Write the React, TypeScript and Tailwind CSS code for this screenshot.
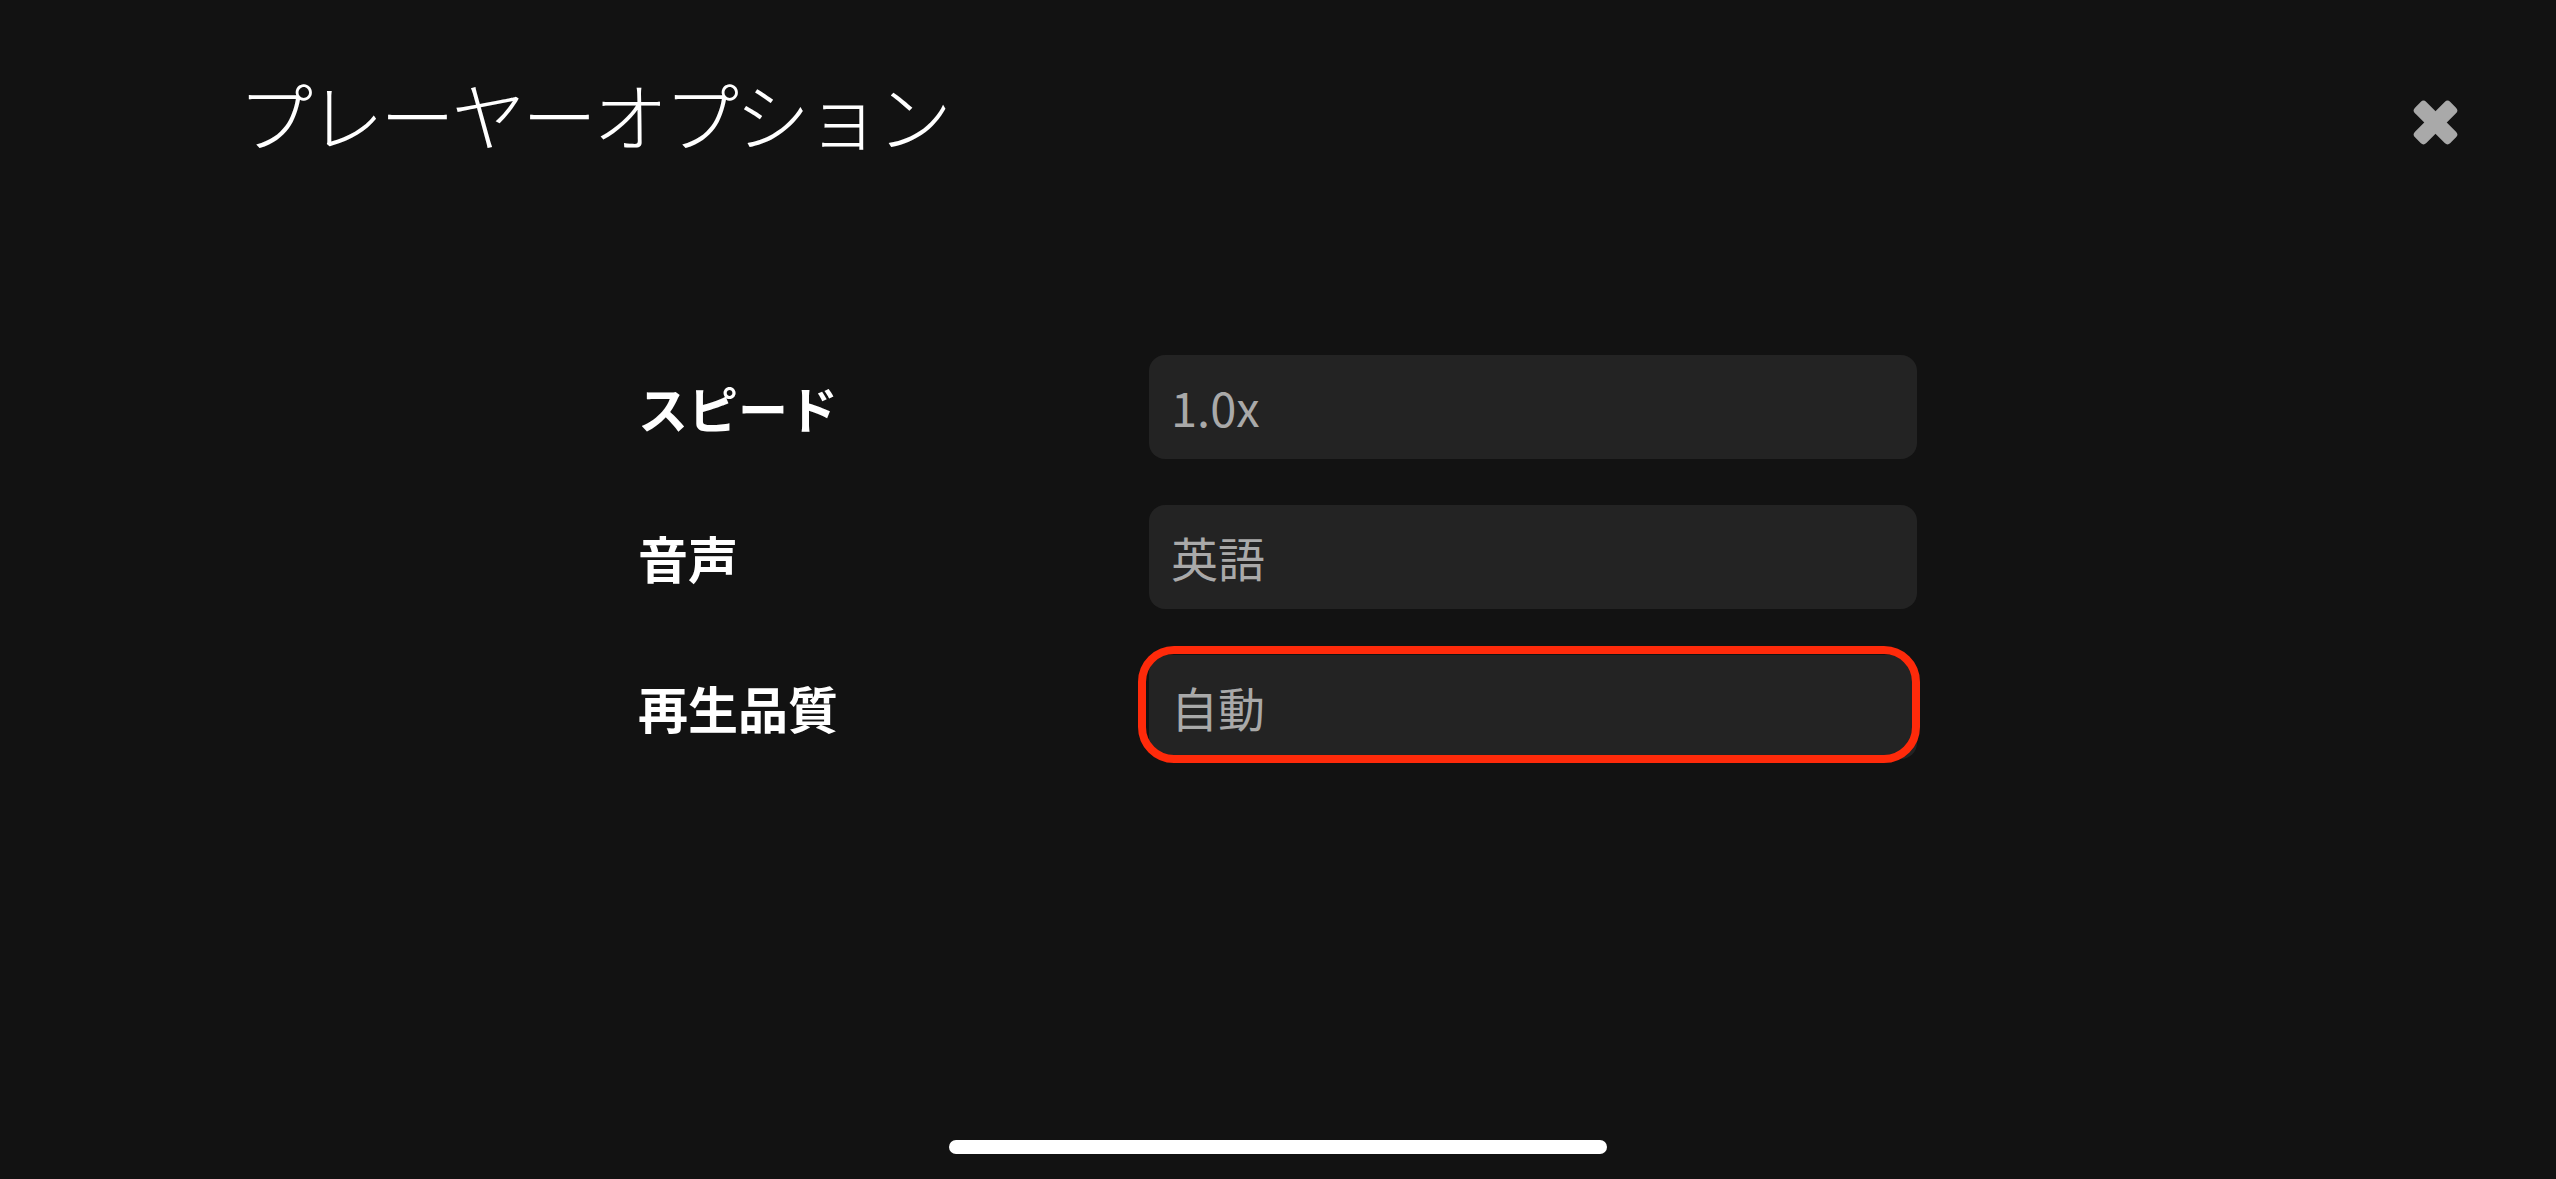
const FONT = { fontFamily: '"Noto Sans CJK JP", "Noto Sans", sans-serif' };

const OPTIONS = [
  { label: "スピード", value: "1.0x", focused: false },
  { label: "音声", value: "英語", focused: false },
  { label: "再生品質", value: "自動", focused: true },
];

function CloseIcon() {
  return (
    <svg width="47" height="47" viewBox="0 0 47 47" aria-hidden>
      <rect x="-1.5" y="15.5" width="50" height="16" rx="4" fill="#a9a9a9" transform="rotate(45 23.5 23.5)" />
      <rect x="-1.5" y="15.5" width="50" height="16" rx="4" fill="#a9a9a9" transform="rotate(-45 23.5 23.5)" />
    </svg>
  );
}

export default function App() {
  return (
    <div className="relative flex h-[1179px] w-full flex-col overflow-hidden bg-[#121212]" style={FONT}>
      {/* header */}
      <div className="flex items-start justify-between pl-[238px] pr-[97px] pt-[76px]">
        <h1 className="text-[75px] font-light leading-none tracking-[-4px] text-white">プレーヤーオプション</h1>
        <button className="mt-[23px]">
          <CloseIcon />
        </button>
      </div>

      {/* options */}
      <div className="ml-[638px] mt-[204px] grid grid-cols-[511px_768px] gap-y-[46px]">
        {OPTIONS.map((o) => (
          <div key={o.label} className="contents">
            <div className="flex h-[104px] items-center text-[50px] font-bold text-white">{o.label}</div>
            <div className="relative flex h-[104px] items-center rounded-[16px] bg-[#232323] pl-[22px] text-[47px] font-normal text-[#a9a9a9]">
              {o.value}
              {o.focused && (
                <div className="pointer-events-none absolute bottom-[-4px] left-[-11px] right-[-3px] top-[-9px] rounded-[36px] border-[8px] border-[#ff2a0a]" />
              )}
            </div>
          </div>
        ))}
      </div>

      {/* home indicator */}
      <div className="mt-auto flex justify-center pb-[25px]">
        <div className="h-[14px] w-[658px] rounded-full bg-white" />
      </div>
    </div>
  );
}
